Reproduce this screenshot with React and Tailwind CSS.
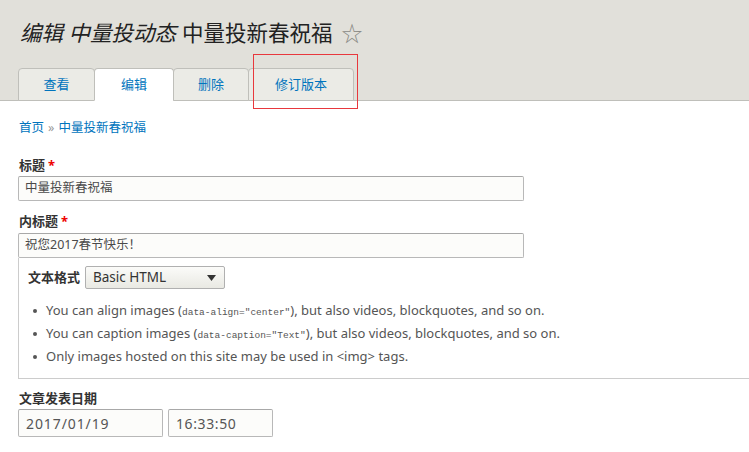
import React from "react";

const tabBase =
  "h-[33px] flex items-center justify-center border border-[#bfbfba] rounded-t-[4px] text-[13px] text-[#0074bd]";

export default function App() {
  return (
    <div className="relative w-[749px] h-[452px] overflow-hidden bg-white font-['Noto_Sans','Noto_Sans_CJK_SC',sans-serif] text-[#333]">
      {/* Header */}
      <div className="h-[101px] bg-[#e1e0da] border-b border-[#bfbfba] flex flex-col px-[18px]">
        <div className="mt-[18px] h-[30px] flex items-center pl-[2px] text-[21.5px] text-[#222] leading-[30px]">
          <em className="italic">编辑 中量投动态</em>
          <span className="ml-[6px]">中量投新春祝福</span>
          <span className="ml-[9px] text-[21px] text-[#8a8a85]">☆</span>
        </div>
        <div className="mt-auto flex -mb-px">
          <div className={tabBase + " w-[77px] bg-[#ebebe6]"}>查看</div>
          <div className={tabBase + " -ml-px w-[80px] bg-white border-b-white"}>编辑</div>
          <div className={tabBase + " -ml-px w-[76px] bg-[#ebebe6]"}>删除</div>
          <div className={tabBase + " -ml-px w-[106px] bg-[#ebebe6]"}>修订版本</div>
        </div>
      </div>

      {/* annotation box */}
      <div className="absolute left-[253px] top-[54px] w-[105px] h-[55px] border border-[#e8383d]" />

      {/* Content */}
      <div className="px-[18px]">
        <div className="mt-[18px] h-[18px] leading-[18px] text-[12.5px] pl-px">
          <span className="text-[#0074bd]">首页</span>
          <span className="text-[#999] mx-[4px]">»</span>
          <span className="text-[#0074bd]">中量投新春祝福</span>
        </div>

        <div className="mt-[19px] h-[18px] leading-[18px] text-[13px] font-bold text-[#333] pl-px">
          标题<span className="text-[#e00] ml-[3px]">*</span>
        </div>
        <div className="mt-[2px] w-[506px] h-[25px] bg-[#fcfcfa] border border-[#b8b8b8] border-t-[#a8a8a8] rounded-[2px] flex items-center pl-[6px] text-[12.5px] text-[#4a4a4a]">
          中量投新春祝福
        </div>

        <div className="mt-[11px] h-[18px] leading-[18px] text-[13px] font-bold text-[#333] pl-px">
          内标题<span className="text-[#e00] ml-[3px]">*</span>
        </div>
        <div className="mt-[3px] w-[506px] h-[25px] bg-[#fcfcfa] border border-[#b8b8b8] border-t-[#a8a8a8] rounded-[2px] flex items-center pl-[6px] text-[12.5px] text-[#4a4a4a]">
          祝您2017春节快乐！
        </div>

        <div className="w-[760px] h-[121px] border-l border-b border-[#cccccc] pl-[9px] pt-[8px]">
          <div className="flex items-center h-[23px]">
            <span className="text-[13px] font-bold text-[#333]">文本格式</span>
            <div className="ml-[5px] w-[140px] h-[23px] border border-[#b0b0b0] rounded-[2px] bg-gradient-to-b from-[#fbfbf9] to-[#e9e9e3] flex items-center justify-between pl-[7px] pr-[8px]">
              <span className="text-[13.5px] text-[#333]">Basic HTML</span>
              <svg width="9" height="6" viewBox="0 0 9 6">
                <path d="M0 0 L9 0 L4.5 6 Z" fill="#333" />
              </svg>
            </div>
          </div>
          <ul className="mt-[10px] text-[13px] text-[#555]">
            <li className="h-[23px] flex items-center">
              <span className="w-[4px] h-[4px] rounded-full bg-[#555] ml-[5px] mr-[9px]" />
              <span>
                You can align images (
                <code className="font-['Liberation_Mono',monospace] text-[9.5px]">data-align="center"</code>
                ), but also videos, blockquotes, and so on.
              </span>
            </li>
            <li className="h-[23px] flex items-center">
              <span className="w-[4px] h-[4px] rounded-full bg-[#555] ml-[5px] mr-[9px]" />
              <span>
                You can caption images (
                <code className="font-['Liberation_Mono',monospace] text-[9.5px]">data-caption="Text"</code>
                ), but also videos, blockquotes, and so on.
              </span>
            </li>
            <li className="h-[23px] flex items-center">
              <span className="w-[4px] h-[4px] rounded-full bg-[#555] ml-[5px] mr-[9px]" />
              <span>Only images hosted on this site may be used in &lt;img&gt; tags.</span>
            </li>
          </ul>
        </div>

        <div className="mt-[10px] h-[18px] leading-[18px] text-[13px] font-bold text-[#333] pl-px">
          文章发表日期
        </div>
        <div className="mt-[2px] flex gap-[5px]">
          <div className="w-[145px] h-[28px] bg-[#fcfcfa] border border-[#b8b8b8] border-t-[#a8a8a8] rounded-[2px] flex items-center pl-[7px] text-[14px] tracking-[0.9px] text-[#555]">
            2017/01/19
          </div>
          <div className="w-[105px] h-[28px] bg-[#fcfcfa] border border-[#b8b8b8] border-t-[#a8a8a8] rounded-[2px] flex items-center pl-[7px] text-[14px] tracking-[0.6px] text-[#555]">
            16:33:50
          </div>
        </div>
      </div>
    </div>
  );
}
